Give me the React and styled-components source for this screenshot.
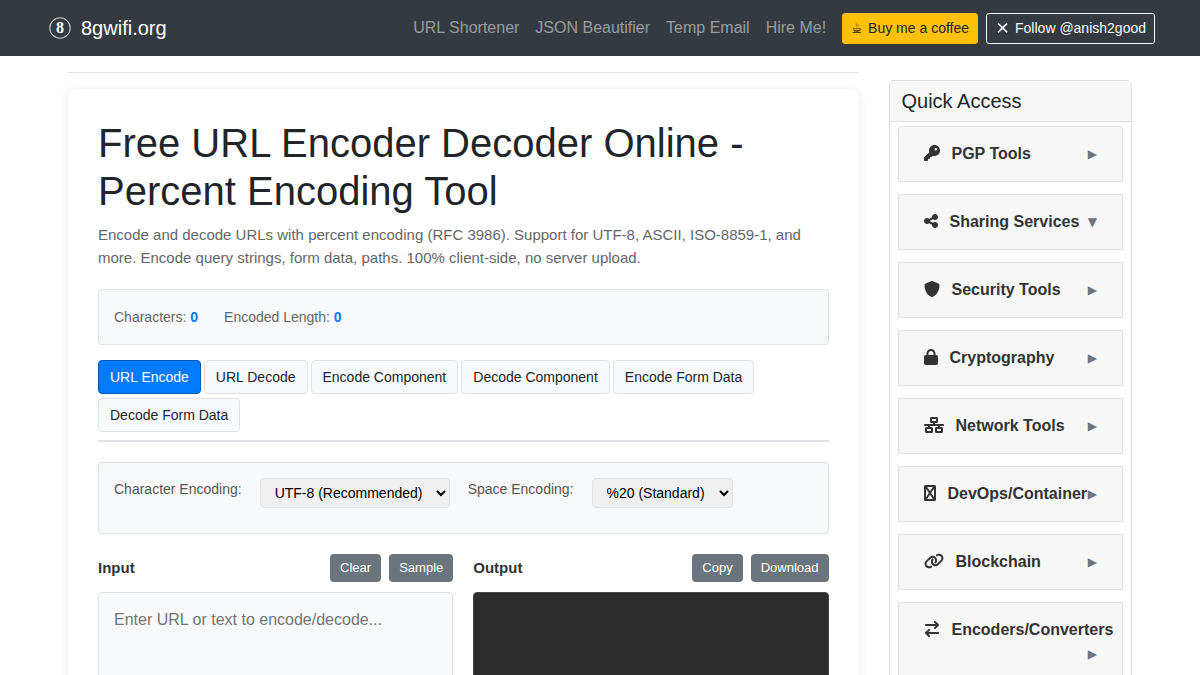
import React, { useState } from "react";
import styled, { createGlobalStyle, css } from "styled-components";
import {
    FaKey,
    FaShareNodes,
    FaShield,
    FaLock,
    FaNetworkWired,
    FaLink,
    FaArrowRightArrowLeft,
} from "react-icons/fa6";

const GlobalStyle = createGlobalStyle`
    *, *::before, *::after {
        box-sizing: border-box;
    }
    body {
        margin: 0;
        background: #fff;
        color: #212529;
        font-family: "Liberation Sans", Arial, sans-serif;
        font-size: 16px;
        line-height: 24px;
    }
    button, select, textarea {
        font-family: inherit;
    }
`;

const Navbar = styled.header`
    background: #343a40;
    min-height: 56px;
    padding: 8px 16px;
    display: flex;
    align-items: center;
`;
const NavInner = styled.div`
    width: 100%;
    max-width: 1140px;
    margin: 0 auto;
    padding: 0 15px;
    display: flex;
    align-items: center;
    justify-content: space-between;
`;
const Brand = styled.a`
    display: flex;
    align-items: center;
    gap: 6px;
    color: #fff;
    font-size: 20px;
    line-height: 30px;
    text-decoration: none;
`;
const NavLinks = styled.nav`
    display: flex;
    align-items: center;
    gap: 12px;
`;
const NavGroup = styled.div`
    display: flex;
    align-items: center;
    gap: 8px;
`;
const NavLink = styled.a`
    color: rgba(255, 255, 255, 0.5);
    padding: 8px 4px;
    text-decoration: none;
`;
const NavButton = styled.a`
    display: flex;
    align-items: center;
    gap: 5px;
    padding: 4px 8px;
    border: 1px solid ${(p) => (p.$yellow ? "#ffc107" : "#f8f9fa")};
    border-radius: 3px;
    background: ${(p) => (p.$yellow ? "#ffc107" : "transparent")};
    color: ${(p) => (p.$yellow ? "#212529" : "#f8f9fa")};
    font-size: 14px;
    line-height: 21px;
    text-decoration: none;
    white-space: nowrap;
`;

const Page = styled.div`
    max-width: 1094px;
    margin: 0 auto;
    display: flex;
    align-items: flex-start;
`;
const MainColumn = styled.main`
    flex: 0 0 75%;
    min-width: 0;
    padding: 0 15px;
`;
const SideColumn = styled.aside`
    flex: 0 0 25%;
    min-width: 0;
    padding: 24px 15px;
`;
const Divider = styled.hr`
    margin: 16px 0;
    border: 0;
    border-top: 1px solid rgba(0, 0, 0, 0.1);
`;

const Card = styled.section`
    padding: 30px;
    border-radius: 8px;
    background: #fff;
    box-shadow: 0 2px 10px rgba(0, 0, 0, 0.1);
`;
const Title = styled.h1`
    margin: 0 0 8px;
    font-size: 40px;
    line-height: 48px;
    font-weight: 500;
`;
const Intro = styled.p`
    margin: 0 0 20px;
    color: #666;
    font-size: 15px;
    line-height: 23px;
`;
const Panel = styled.div`
    border: 1px solid #dee2e6;
    border-radius: 4px;
    background: #f8f9fa;
    padding: 15px;
`;
const Stats = styled(Panel)`
    display: flex;
    gap: 26px;
    margin-bottom: 15px;
    color: #666;
    font-size: 14px;
`;
const StatValue = styled.strong`
    color: #007bff;
`;
const Tabs = styled.div`
    display: flex;
    flex-wrap: wrap;
    gap: 4px 3px;
    margin-bottom: 20px;
    padding-bottom: 8px;
    border-bottom: 2px solid #dee2e6;
`;
const Tab = styled.button`
    padding: 6px 11px;
    border: 1px solid #dee2e6;
    border-radius: 4px;
    background: #f8f9fa;
    color: #212529;
    font-size: 14px;
    line-height: 20px;
    cursor: pointer;
    ${(p) =>
        p.$active &&
        css`
            background: #007bff;
            border-color: #0056b3;
            color: #fff;
        `}
`;
const Options = styled(Panel)`
    display: flex;
    flex-wrap: wrap;
    align-items: flex-start;
    gap: 18px;
    margin-bottom: 20px;
    padding-bottom: 25px;
`;
const OptionLabel = styled.label`
    color: #555;
    font-size: 14px;
    line-height: 22px;
`;
const Select = styled.select`
    height: 30px;
    padding: 0 10px;
    border: 1px solid #dee2e6;
    border-radius: 4px;
    background-color: #efefef;
    color: #000;
    font-size: 14px;
`;

const Editors = styled.div`
    display: grid;
    grid-template-columns: 1fr 1fr;
    gap: 20px;
`;
const EditorHead = styled.div`
    display: flex;
    align-items: center;
    gap: 8px;
    margin-bottom: 10px;
`;
const EditorLabel = styled.label`
    margin-right: auto;
    color: #333;
    font-size: 15px;
    font-weight: bold;
`;
const SmallButton = styled.button`
    padding: 4px 10px;
    border: 0;
    border-radius: 4px;
    background: #6c757d;
    color: #fff;
    font-size: 13px;
    line-height: 20px;
    cursor: pointer;
`;
const TextBox = styled.textarea`
    display: block;
    width: 100%;
    height: 300px;
    padding: 15px;
    border: 1px solid ${(p) => (p.$dark ? "#444" : "#dee2e6")};
    border-radius: 4px;
    background: ${(p) => (p.$dark ? "#2d2d2d" : "#f8f9fa")};
    color: ${(p) => (p.$dark ? "#f8f8f2" : "#212529")};
    font-size: 16px;
    line-height: 24px;
    resize: vertical;
    &::placeholder {
        color: #757575;
    }
`;

const SideCard = styled.div`
    border: 1px solid #dfdfdf;
    border-radius: 4px;
`;
const SideTitle = styled.h2`
    margin: 0;
    padding: 8px 12px;
    border-bottom: 1px solid #dfdfdf;
    background: #f7f7f7;
    font-size: 20px;
    line-height: 24px;
    font-weight: 500;
`;
const SideList = styled.div`
    display: flex;
    flex-direction: column;
    gap: 12px;
    padding: 4px 8px;
`;
const SideItem = styled.button`
    display: flex;
    flex-wrap: wrap;
    align-items: center;
    justify-content: space-between;
    width: 100%;
    padding: 15px 25px;
    border: 1px solid #dfdfdf;
    background: #f7f7f7;
    color: #333;
    font-size: 16px;
    font-weight: bold;
    line-height: 24px;
    text-align: left;
    cursor: pointer;
    &:first-child {
        border-radius: 4px 4px 0 0;
    }
`;
const SideLabel = styled.span`
    display: flex;
    align-items: flex-start;
    gap: 12px;
    white-space: nowrap;
`;
const ToolIcon = styled.span`
    flex: none;
    width: ${(p) => p.$width}px;
    margin-top: 3px;
    svg {
        display: block;
        width: 100%;
        height: 16px;
    }
`;
const Arrow = styled.span`
    margin-left: auto;
    color: #6c757d;
    font-family: "DejaVu Sans", sans-serif;
    font-size: 12px;
    font-weight: normal;
`;

const LogoDigit = styled.text`
    fill: #fff;
    font-family: "Liberation Serif", serif;
    font-size: 16px;
    font-weight: bold;
    text-anchor: middle;
`;

function Logo() {
    return (
        <svg width="30" height="30" viewBox="0 0 30 30" fill="none" aria-hidden="true">
            <circle cx="15" cy="15" r="10.2" stroke="#c8cacc" strokeWidth="1.1" />
            <LogoDigit x="15" y="20">8</LogoDigit>
        </svg>
    );
}

function CupIcon() {
    return (
        <svg width="12" height="14" viewBox="0 0 12 14" fill="none" stroke="currentColor" aria-hidden="true">
            <path d="M5.3 2 C4.2 3.4 6.2 4 5.2 5.6 M7.2 3.2 C6.4 4.2 7.6 4.6 7 5.6" strokeWidth="0.5" />
            <path d="M2.5 7.4 H9 M2.5 7.4 C2.6 9.6 3.4 10.4 4.4 10.5 H7 C8.2 10.4 8.9 9.4 9 7.4" strokeWidth="0.6" />
            <path d="M9 7.8 C10.8 7.6 10.4 9.6 8.6 9.4" strokeWidth="0.5" />
            <path d="M3 9.4 H8.6 M1.6 11.5 H10" strokeWidth="0.8" />
        </svg>
    );
}

function CrossIcon() {
    return (
        <svg width="15" height="14" viewBox="0 0 15 14" fill="none" aria-hidden="true">
            <path d="M3 2.4 L12.2 11.4 M12.2 2.4 L3 11.4" stroke="currentColor" strokeWidth="1.5" />
        </svg>
    );
}

function BoxIcon() {
    return (
        <svg viewBox="0 0 12 16" fill="none" aria-hidden="true">
            <rect x="1" y="1" width="10" height="14" rx="0.5" stroke="currentColor" strokeWidth="2" />
            <path d="M2 2 L10 14 M10 2 L2 14" stroke="currentColor" strokeWidth="1.9" />
        </svg>
    );
}

const tabs = [
    "URL Encode",
    "URL Decode",
    "Encode Component",
    "Decode Component",
    "Encode Form Data",
    "Decode Form Data",
];

const tools = [
    { name: "PGP Tools", icon: <FaKey />, width: 16 },
    { name: "Sharing Services", icon: <FaShareNodes />, width: 14, open: true },
    { name: "Security Tools", icon: <FaShield />, width: 16 },
    { name: "Cryptography", icon: <FaLock />, width: 14 },
    { name: "Network Tools", icon: <FaNetworkWired />, width: 20 },
    { name: "DevOps/Container", icon: <BoxIcon />, width: 12 },
    { name: "Blockchain", icon: <FaLink />, width: 20 },
    { name: "Encoders/Converters", icon: <FaArrowRightArrowLeft />, width: 16 },
];

function App() {
    const [active, setActive] = useState(tabs[0]);
    const [text, setText] = useState("");

    return (
        <>
            <GlobalStyle />
            <Navbar>
                <NavInner>
                    <Brand href="#">
                        <Logo />
                        8gwifi.org
                    </Brand>
                    <NavLinks>
                        <NavGroup>
                            <NavLink href="#">URL Shortener</NavLink>
                            <NavLink href="#">JSON Beautifier</NavLink>
                            <NavLink href="#">Temp Email</NavLink>
                            <NavLink href="#">Hire Me!</NavLink>
                        </NavGroup>
                        <NavGroup>
                            <NavButton href="#" $yellow>
                                <CupIcon />
                                Buy me a coffee
                            </NavButton>
                            <NavButton href="#">
                                <CrossIcon />
                                Follow @anish2good
                            </NavButton>
                        </NavGroup>
                    </NavLinks>
                </NavInner>
            </Navbar>
            <Page>
                <MainColumn>
                    <Divider />
                    <Card>
                        <Title>Free URL Encoder Decoder Online - Percent Encoding Tool</Title>
                        <Intro>
                            Encode and decode URLs with percent encoding (RFC 3986). Support for
                            UTF-8, ASCII, ISO-8859-1, and more. Encode query strings, form data,
                            paths. 100% client-side, no server upload.
                        </Intro>
                        <Stats>
                            <span>
                                Characters: <StatValue>{text.length}</StatValue>
                            </span>
                            <span>
                                Encoded Length:{" "}
                                <StatValue>{encodeURIComponent(text).length}</StatValue>
                            </span>
                        </Stats>
                        <Tabs>
                            {tabs.map((tab) => (
                                <Tab
                                    key={tab}
                                    type="button"
                                    $active={tab === active}
                                    onClick={() => setActive(tab)}
                                >
                                    {tab}
                                </Tab>
                            ))}
                        </Tabs>
                        <Options>
                            <OptionLabel htmlFor="charset">Character Encoding:</OptionLabel>
                            <Select id="charset">
                                <option>UTF-8 (Recommended)</option>
                            </Select>
                            <OptionLabel htmlFor="space">Space Encoding:</OptionLabel>
                            <Select id="space">
                                <option>%20 (Standard)</option>
                            </Select>
                        </Options>
                        <Editors>
                            <div>
                                <EditorHead>
                                    <EditorLabel htmlFor="input">Input</EditorLabel>
                                    <SmallButton type="button" onClick={() => setText("")}>
                                        Clear
                                    </SmallButton>
                                    <SmallButton type="button">Sample</SmallButton>
                                </EditorHead>
                                <TextBox
                                    id="input"
                                    placeholder="Enter URL or text to encode/decode..."
                                    value={text}
                                    onChange={(e) => setText(e.target.value)}
                                />
                            </div>
                            <div>
                                <EditorHead>
                                    <EditorLabel htmlFor="output">Output</EditorLabel>
                                    <SmallButton type="button">Copy</SmallButton>
                                    <SmallButton type="button">Download</SmallButton>
                                </EditorHead>
                                <TextBox
                                    id="output"
                                    $dark
                                    readOnly
                                    value={encodeURIComponent(text)}
                                />
                            </div>
                        </Editors>
                    </Card>
                </MainColumn>
                <SideColumn>
                    <SideCard>
                        <SideTitle>Quick Access</SideTitle>
                        <SideList>
                            {tools.map((tool) => (
                                <SideItem key={tool.name} type="button">
                                    <SideLabel>
                                        <ToolIcon $width={tool.width}>{tool.icon}</ToolIcon>
                                        {tool.name}
                                    </SideLabel>
                                    <Arrow>{tool.open ? "▼" : "▶"}</Arrow>
                                </SideItem>
                            ))}
                        </SideList>
                    </SideCard>
                </SideColumn>
            </Page>
        </>
    );
}

export default App;
